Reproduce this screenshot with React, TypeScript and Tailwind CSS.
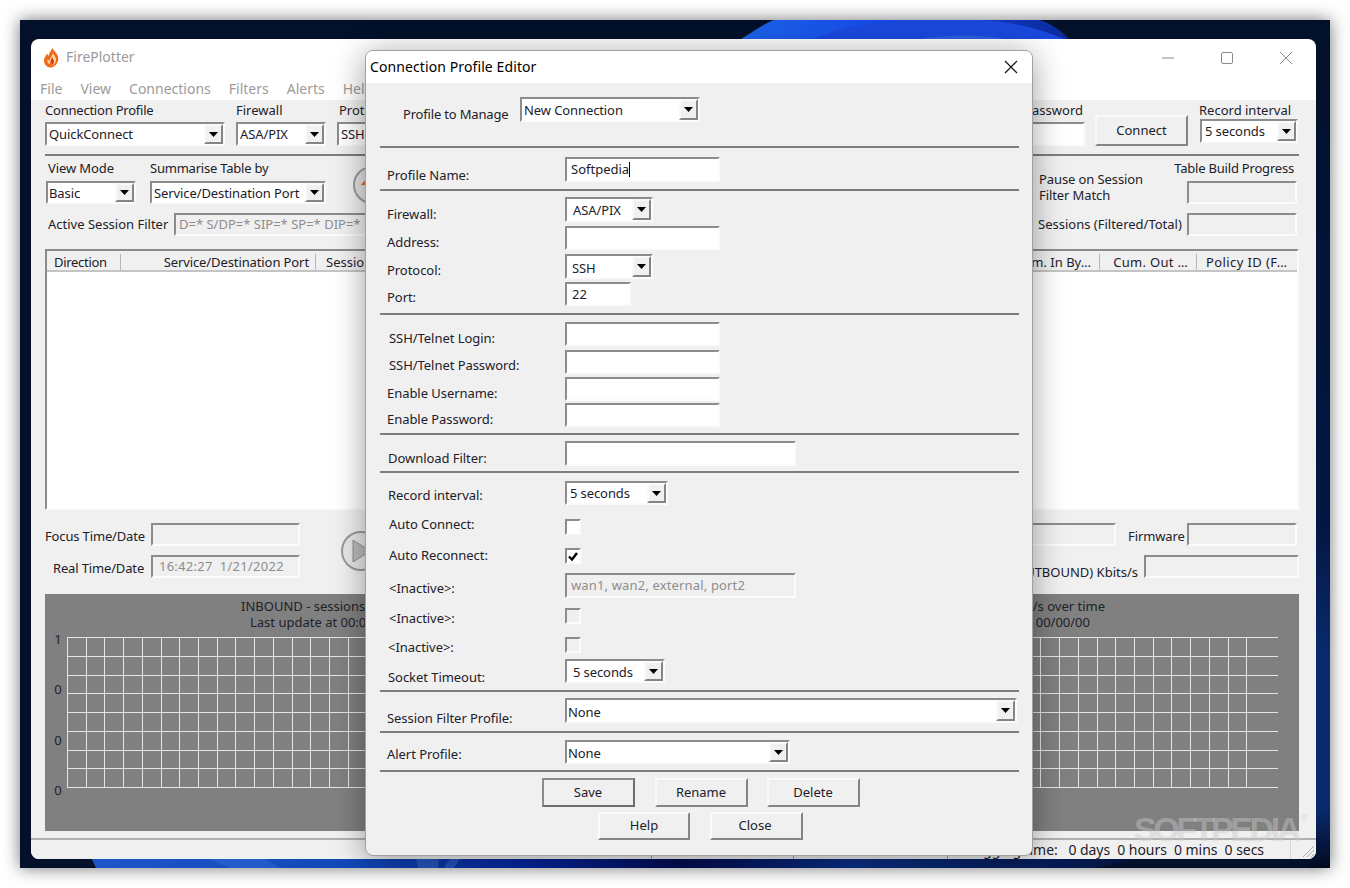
import type { ReactNode } from "react";

const sunken = "border-2 border-t-[#8c8c8c] border-l-[#8c8c8c] border-r-[#fbfbfb] border-b-[#fbfbfb]";
const raised = "border-2 border-t-[#fafafa] border-l-[#fafafa] border-r-[#858585] border-b-[#858585]";

function TextBox({ className = "", value, disabled, children }: { className?: string; value?: string; disabled?: boolean; children?: ReactNode }) {
  return (
    <div className={`${sunken} ${disabled ? "bg-[#f0f0f0] text-[#8e8e8e]" : "bg-white"} flex shrink-0 items-center whitespace-nowrap overflow-hidden ${className}`}>
      {value}
      {children}
    </div>
  );
}

function Combo({ className = "", textClass = "pt-[2px]", value }: { className?: string; textClass?: string; value: string }) {
  return (
    <div className={`${sunken} bg-white flex shrink-0 items-center justify-between whitespace-nowrap ${className}`}>
      <span className={`tracking-[-0.1px] ${textClass}`}>{value}</span>
      <span className={`${raised} bg-[#f0f0f0] h-full w-[19px] flex items-center justify-center shrink-0`}>
        <svg width="9" height="5" viewBox="0 0 9 5"><path d="M0 0h9L4.500 5z" fill="#000" /></svg>
      </span>
    </div>
  );
}

function Btn({ className = "", label, isDefault }: { className?: string; label: string; isDefault?: boolean }) {
  return (
    <div className={`${isDefault ? "border-2 border-[#6e6e6e] border-t-[#8c8c8c] border-l-[#8c8c8c]" : raised} bg-[#f0f0f0] flex items-center justify-center shrink-0 ${className}`}>
      {label}
    </div>
  );
}

function Sep({ className = "" }: { className?: string }) {
  return <div className={`h-[2px] bg-[#7d7d7d] shrink-0 ${className}`} />;
}

// label column is 185 wide, so every control starts at the same x
function Row({ className = "", labelClass = "", label, children }: { className?: string; labelClass?: string; label: string; children: ReactNode }) {
  return (
    <div className={`flex items-start shrink-0 ${className}`}>
      <div className={`w-[185px] shrink-0 -mb-[30px] leading-[16px] whitespace-nowrap tracking-[-0.05px] ${labelClass}`}>{label}</div>
      {children}
    </div>
  );
}

function Check({ className = "", checked, disabled }: { className?: string; checked?: boolean; disabled?: boolean }) {
  return (
    <div className={`${sunken} ${disabled ? "bg-[#f0f0f0]" : "bg-white"} w-[16px] h-[16px] flex items-center justify-center ${className}`}>
      {checked && (
        <svg width="10" height="9" viewBox="0 0 10 9"><path d="M1 4.500l3 3L9 1" fill="none" stroke="#000" strokeWidth="2.400" /></svg>
      )}
    </div>
  );
}

function ConnectionProfileEditor() {
  return (
    <div className="absolute left-[345px] top-[30px] w-[668px] h-[806px] rounded-[8px] border border-[#a0a0a0] bg-[#f0f0f0] shadow-[0_4px_32px_rgba(0,0,0,0.38)] flex flex-col overflow-hidden z-10 text-[#1d2029]">
      <div className="h-[32px] bg-white flex items-center justify-between pl-[4px] pr-[14px] shrink-0 text-[14px] text-black">
        <span className="pb-[2px] tracking-[0.1px]">Connection Profile Editor</span>
        <svg width="14" height="14" viewBox="0 0 14 14"><path d="M1 1l12 12M13 1L1 13" stroke="#111" strokeWidth="1.200" /></svg>
      </div>
      <div className="flex flex-col pl-[14px] pr-[13px]">
        <div className="flex items-start mt-[14px]">
          <div className="w-[140px] pl-[23px] pt-[9px] -mb-[30px] whitespace-nowrap leading-[16px] tracking-[-0.18px]">Profile to Manage</div>
          <Combo className="w-[180px] h-[25px] pl-[2px]" value="New Connection" />
        </div>
        <Sep className="mt-[24px]" />

        <Row className="mt-[9px]" labelClass="pl-[7px] pt-[10px]" label="Profile Name:">
          <TextBox className="w-[155px] h-[25px] pl-[4px]">
            Softpedia<span className="w-px h-[15px] bg-black" />
          </TextBox>
        </Row>
        <Sep className="mt-[7px]" />

        <Row className="mt-[6px]" labelClass="pl-[7px] pt-[9px]" label="Firewall:">
          <Combo className="w-[88px] h-[25px] pl-[6px]" value="ASA/PIX" />
        </Row>
        <Row className="mt-[4px]" labelClass="pl-[7px] pt-[8px]" label="Address:">
          <TextBox className="w-[155px] h-[24px]" />
        </Row>
        <Row className="mt-[4px]" labelClass="pl-[7px] pt-[8px]" label="Protocol:">
          <Combo className="w-[88px] h-[25px] pl-[5px]" textClass="pt-[4px]" value="SSH" />
        </Row>
        <Row className="mt-[3px]" labelClass="pl-[7px] pt-[7px]" label="Port:">
          <TextBox className="w-[66px] h-[24px] pl-[5px] pt-[2px]" value="22" />
        </Row>
        <Sep className="mt-[7px]" />

        <Row className="mt-[7px]" labelClass="pl-[9px] pt-[8px]" label="SSH/Telnet Login:">
          <TextBox className="w-[155px] h-[24px]" />
        </Row>
        <Row className="mt-[4px]" labelClass="pl-[9px] pt-[7px]" label="SSH/Telnet Password:">
          <TextBox className="w-[155px] h-[24px]" />
        </Row>
        <Row className="mt-[3px]" labelClass="pl-[7px] pt-[8px]" label="Enable Username:">
          <TextBox className="w-[155px] h-[24px]" />
        </Row>
        <Row className="mt-[2px]" labelClass="pl-[7px] pt-[8px]" label="Enable Password:">
          <TextBox className="w-[155px] h-[24px]" />
        </Row>
        <Sep className="mt-[6px]" />

        <Row className="mt-[6px]" labelClass="pl-[8px] pt-[9px]" label="Download Filter:">
          <TextBox className="w-[231px] h-[25px]" />
        </Row>
        <Sep className="mt-[5px]" />

        <Row className="mt-[8px]" labelClass="pl-[8px] pt-[6px]" label="Record interval:">
          <Combo className="w-[103px] h-[24px] pl-[3px]" value="5 seconds" />
        </Row>
        <Row className="mt-[11px]" labelClass="pl-[9px]" label="Auto Connect:">
          <Check className="mt-[3px]" />
        </Row>
        <Row className="mt-[12px]" labelClass="pl-[9px]" label="Auto Reconnect:">
          <Check className="mt-[1px]" checked />
        </Row>
        <Row className="mt-[9px]" labelClass="pl-[9px] pt-[7px]" label="<Inactive>:">
          <TextBox className="w-[231px] h-[25px] pl-[4px] tracking-[0.15px]" value="wan1, wan2, external, port2" disabled />
        </Row>
        <Row className="mt-[10px]" labelClass="pl-[9px] pt-[2px]" label="<Inactive>:">
          <Check disabled />
        </Row>
        <Row className="mt-[13px]" labelClass="pl-[8px] pt-[2px]" label="<Inactive>:">
          <Check disabled />
        </Row>
        <Row className="mt-[6px]" labelClass="pl-[8px] pt-[10px]" label="Socket Timeout:">
          <Combo className="w-[100px] h-[24px] pl-[6px]" textClass="pt-[4px]" value="5 seconds" />
        </Row>
        <Sep className="mt-[7px]" />

        <Row className="mt-[6px]" labelClass="pl-[7px] pt-[12px]" label="Session Filter Profile:">
          <Combo className="w-[452px] h-[25px] pl-px" textClass="pt-[4px]" value="None" />
        </Row>
        <Sep className="mt-[8px]" />

        <Row className="mt-[7px]" labelClass="pl-[7px] pt-[6px]" label="Alert Profile:">
          <Combo className="w-[225px] h-[24px] pl-px" textClass="pt-[4px]" value="None" />
        </Row>
        <Sep className="mt-[6px]" />

        <div className="flex justify-center gap-[19px] mt-[6px] pl-[2px]">
          <Btn className="w-[93px] h-[29px] mr-px" label="Save" isDefault />
          <Btn className="w-[93px] h-[29px]" label="Rename" />
          <Btn className="w-[93px] h-[29px]" label="Delete" />
        </div>
        <div className="flex justify-center gap-[20px] mt-[5px] pl-[2px]">
          <Btn className="w-[92px] h-[28px]" label="Help" />
          <Btn className="w-[93px] h-[28px] pr-[3px]" label="Close" />
        </div>
      </div>
    </div>
  );
}

function Flame() {
  return (
    <svg width="17" height="20" viewBox="0 0 17 20">
      <path d="M9.500 0c1 3 4.500 5 5.500 8.500 1 4-1 9-6 11-5 .5-8-3-8-7 0-3 2-4.500 3-7 .5 1 1 2 1.500 2.500C6 5 8 3 9.500 0z" fill="#ee6a1b" />
      <path d="M10 5c.5 2 3 4 3 6.500 0 3-2 5.500-4.500 6.500 1.500-2 1-4-.5-5.500-1 1-1.500 2.500-1.500 4-1.500-1-2.500-3-2-5 1 .5 1.500 1 2 1 .5-3 3-4.500 3.500-7.500z" fill="#fbd7a5" />
      <path d="M9 9c.5 1.500 2 2.500 2 4.500 0 1.500-.8 2.800-2 3.500.3-1.800-.3-3-1.300-4C8 11.500 8.800 10.500 9 9z" fill="#e22a12" />
    </svg>
  );
}

function ChartGrid() {
  const vertical = Array.from({ length: 64 }, (_, i) => 0.5 + Math.round(i * 18.72));
  const horizontal = Array.from({ length: 9 }, (_, i) => 0.5 + Math.round(i * 18.75));
  return (
    <svg width="1212" height="152" className="shrink-0" shapeRendering="crispEdges">
      {vertical.map((x) => (
        <line key={x} x1={x} x2={x} y1={0} y2={150} stroke="#e4e4e4" />
      ))}
      {horizontal.map((y) => (
        <line key={y} x1={0} x2={1211} y1={y} y2={y} stroke="#e4e4e4" />
      ))}
    </svg>
  );
}

function MainWindow() {
  return (
    <div className="absolute left-[11px] top-[19px] w-[1285px] h-[820px] rounded-[8px] overflow-hidden bg-white flex flex-col text-[#1d2029]">
      <div className="h-[38px] shrink-0 flex items-center justify-between pl-[12px] pr-[24px] text-[#9b9b9b]">
        <div className="flex items-center gap-[6px] text-[14px]">
          <Flame />
          <span className="pb-[4px]">FirePlotter</span>
        </div>
        <div className="flex items-center gap-[47px] -mt-[1px]">
          <svg width="12" height="12" viewBox="0 0 12 12"><path d="M0 6h12" stroke="#8a8a8a" /></svg>
          <svg width="12" height="12" viewBox="0 0 12 12"><rect x=".5" y=".5" width="11" height="11" rx="1.500" fill="none" stroke="#8a8a8a" /></svg>
          <svg width="12" height="12" viewBox="0 0 12 12"><path d="M0 0l12 12M12 0L0 12" stroke="#8a8a8a" /></svg>
        </div>
      </div>
      <div className="h-[23px] shrink-0 flex items-center pl-[9px] gap-[18px] text-[14px] text-[#9b9b9b]">
        <span>File</span>
        <span>View</span>
        <span>Connections</span>
        <span>Filters</span>
        <span>Alerts</span>
        <span>Help</span>
      </div>

      <div className="flex-1 bg-[#f0f0f0] flex flex-col min-h-0">
        <div className="pl-[14px] pr-[17px] flex flex-col">
          {/* connection toolbar */}
          <div className="flex items-start pt-[2px] h-[47px]">
            <div className="flex gap-[11px]">
              <div className="w-[180px]">
                <div className="h-[20px] leading-[16px] tracking-[-0.22px]">Connection Profile</div>
                <Combo className="h-[24px] pl-[2px]" value="QuickConnect" />
              </div>
              <div className="w-[90px]">
                <div className="h-[20px] leading-[16px]">Firewall</div>
                <Combo className="h-[24px] pl-[2px]" value="ASA/PIX" />
              </div>
              <div className="w-[100px]">
                <div className="h-[20px] leading-[16px] pl-[2px]">Protocol</div>
                <Combo className="h-[24px] pl-[2px]" value="SSH" />
              </div>
            </div>
            <div className="ml-auto flex items-start">
              <div className="w-[150px] flex flex-col items-end">
                <div className="h-[20px] leading-[16px] pr-[2px]">SSH Password</div>
                <TextBox className="w-full h-[24px]" />
              </div>
              <Btn className="ml-[10px] mt-[13px] w-[93px] h-[31px]" label="Connect" />
              <div className="ml-[11px] w-[100px]">
                <div className="h-[17px] leading-[16px] whitespace-nowrap">Record interval</div>
                <Combo className="h-[24px] ml-px mr-px pl-[3px]" value="5 seconds" />
              </div>
            </div>
          </div>
          <Sep className="mt-[7px]" />

          {/* view options */}
          <div className="flex items-start mt-[4px] h-[44px]">
            <div className="w-[90px] ml-px">
              <div className="h-[21px] pl-[2px] leading-[16px] tracking-[-0.1px]">View Mode</div>
              <Combo className="h-[23px] pl-px" value="Basic" />
            </div>
            <div className="w-[176px] ml-[14px]">
              <div className="h-[21px] leading-[16px] tracking-[-0.22px]">Summarise Table by</div>
              <Combo className="h-[23px] pl-[2px]" value="Service/Destination Port" />
            </div>
            <div className="ml-[27px] mt-[6px] w-[38px] h-[38px] rounded-full border-2 border-[#9a9a9a] bg-[#e4e4e4] flex items-center justify-center shrink-0">
              <svg width="24" height="26" viewBox="0 0 24 26"><path d="M12 0l11 13h-6v13H7V13H1z" fill="#e8641f" /></svg>
            </div>
            <div className="ml-auto flex items-start">
              <div className="w-[148px] pt-[11px] leading-[16px] tracking-[-0.1px]">
                Pause on Session
                <br />
                Filter Match
              </div>
              <div className="w-[110px] mr-[2px] flex flex-col items-end">
                <div className="h-[21px] leading-[16px] pr-[3px] whitespace-nowrap tracking-[-0.2px]">Table Build Progress</div>
                <TextBox className="w-[110px] h-[23px]" disabled />
              </div>
            </div>
          </div>
          <div className="flex items-center mt-[9px] h-[23px]">
            <span className="pl-[3px] w-[129px] shrink-0">Active Session Filter</span>
            <TextBox className="w-[300px] h-[23px] pl-[3px]" value="D=* S/DP=* SIP=* SP=* DIP=* DP=*" disabled />
            <span className="ml-auto w-[149px]">Sessions (Filtered/Total)</span>
            <TextBox className="w-[110px] h-[23px] mr-[2px]" disabled />
          </div>

          {/* session table */}
          <div className={`${sunken} mt-[13px] h-[261px] bg-white flex flex-col`}>
            <div className="h-[21px] pt-[2px] shrink-0 bg-[#f0f0f0] border-b-2 border-[#c4c4c4] flex items-center whitespace-nowrap">
              <div className="w-[74px] pl-[7px] border-r border-[#b5b5b5] h-[16px] leading-[16px] tracking-[-0.3px]">Direction</div>
              <div className="w-[195px] pr-[6px] text-right border-r border-[#b5b5b5] h-[16px] leading-[16px] tracking-[-0.1px]">Service/Destination Port</div>
              <div className="pl-[10px] leading-[16px]">Session Count</div>
              <div className="ml-auto w-[100px] pr-[8px] text-right border-r border-[#b5b5b5] h-[16px] leading-[16px]">Cum. In By…</div>
              <div className="w-[97px] pr-[8px] text-right border-r border-[#b5b5b5] h-[16px] leading-[16px] tracking-[0.3px]">Cum. Out …</div>
              <div className="w-[100px] pl-[9px] leading-[16px] tracking-[0.4px]">Policy ID (F…</div>
            </div>
          </div>

          {/* time and bandwidth */}
          <div className="flex items-start mt-[13px] h-[55px]">
            <div className="flex flex-col gap-[9px] w-[255px]">
              <div className="flex items-start">
                <span className="w-[106px] mt-[5px] leading-[16px] shrink-0 tracking-[-0.15px]">Focus Time/Date</span>
                <TextBox className="w-[149px] h-[23px]" disabled />
              </div>
              <div className="flex items-start">
                <span className="w-[106px] mt-[5px] leading-[16px] pl-[8px] shrink-0 tracking-[-0.15px]">Real Time/Date</span>
                <TextBox className="w-[149px] h-[23px] pl-[6px] pt-px tracking-[0.25px]" value={"16:42:27\u00a0\u00a01/21/2022"} disabled />
              </div>
            </div>
            <div className="ml-[41px] mt-[8px] w-[40px] h-[40px] rounded-full border-2 border-[#9a9a9a] bg-[#e8e8e8] flex items-center justify-center shrink-0">
              <svg width="20" height="22" viewBox="0 0 20 22"><path d="M2 0l17 11L2 22z" fill="#bcbcbc" stroke="#8f8f8f" /></svg>
            </div>
            <div className="ml-auto flex flex-col items-end gap-[9px]">
              <div className="flex items-start">
                <TextBox className="w-[150px] h-[23px]" disabled />
                <span className="ml-[12px] w-[59px] mt-[5px] leading-[16px] tracking-[-0.1px]">Firmware</span>
                <TextBox className="w-[110px] h-[23px] mr-[2px]" disabled />
              </div>
              <div className="flex items-start">
                <span className="mr-[6px] mt-[9px] leading-[16px]">Total (OUTBOUND) Kbits/s</span>
                <TextBox className="w-[155px] h-[23px]" disabled />
              </div>
            </div>
          </div>

          {/* chart panel */}
          <div className="mt-[16px] h-[237px] bg-[#808080] flex flex-col text-[#20222a]">
            <div className="flex justify-between pt-[4px] pl-[196px] pr-[194px] leading-[16px]">
              <span>INBOUND - sessions</span>
              <span>OUTBOUND - Kbits/s over time</span>
            </div>
            <div className="flex justify-between pl-[205px] pr-[209px] leading-[16px]">
              <span>Last update at 00:00:00</span>
              <span>00:00:00 00/00/00</span>
            </div>
            <div className="flex mt-[7px]">
              <div className="w-[22px] -mt-[6px] h-[167px] flex flex-col justify-between items-center pl-[4px] leading-[16px] shrink-0">
                <span>1</span>
                <span>0</span>
                <span>0</span>
                <span>0</span>
              </div>
              <ChartGrid />
            </div>
          </div>
        </div>

        {/* status bar */}
        <div className="mt-[7px] flex-1 border-t-2 border-[#b0b0b0] flex items-stretch relative">
          <div className="w-[621px] border-r border-[#a0a0a0]" />
          <div className="w-[142px] border-r border-[#a0a0a0]" />
          <div className="w-[154px] border-r border-[#a0a0a0]" />
          <div className="w-[343px] border-r border-[#d8d8d8] flex items-center justify-end pr-[26px] whitespace-pre text-[14px] leading-[16px] tracking-[-0.05px]">
            {"Logging time:   0 days  0 hours  0 mins  0 secs"}
          </div>
          <svg width="15" height="15" viewBox="0 0 15 15" className="absolute right-[1px] bottom-[1px]">
            <path d="M14 3L3 14M14 7l-7 7M14 11l-3 3" stroke="#a8a8a8" fill="none" />
          </svg>
        </div>
      </div>
    </div>
  );
}

function Wallpaper() {
  return (
    <svg className="absolute inset-0" width="1310" height="848" viewBox="0 0 1310 848">
      <defs>
        <linearGradient id="bottomBand" x1="0" x2="1" y1="0" y2="0">
          <stop offset="0" stopColor="#1d56c8" />
          <stop offset="0.25" stopColor="#1148b8" />
          <stop offset="0.42" stopColor="#05249a" />
          <stop offset="0.56" stopColor="#020d50" />
          <stop offset="0.72" stopColor="#0a2f86" />
          <stop offset="1" stopColor="#03123a" />
        </linearGradient>
        <linearGradient id="topBloom" x1="0" x2="1" y1="0" y2="0">
          <stop offset="0" stopColor="#1c62e8" />
          <stop offset="0.5" stopColor="#1546e6" />
          <stop offset="1" stopColor="#0b2a9a" />
        </linearGradient>
        <linearGradient id="rightSide" x1="0" x2="0" y1="0" y2="1">
          <stop offset="0" stopColor="#03102a" />
          <stop offset="0.6" stopColor="#041744" />
          <stop offset="0.75" stopColor="#0a2a6e" />
          <stop offset="0.93" stopColor="#0a2a6e" />
          <stop offset="1" stopColor="#020a20" />
        </linearGradient>
      </defs>
      <rect width="1310" height="848" fill="#03102a" />
      <rect x="1290" width="20" height="848" fill="url(#rightSide)" />
      <path d="M720 20C750 0 760-5 768 0H1020C1035 5 1045 15 1050 20V30H720z" fill="url(#topBloom)" />
      <path d="M790 20C830 5 860 0 880 0H960C1000 2 1030 12 1050 22V30H790z" fill="#1a48dc" />
      <path d="M895 20C925 14 965 14 990 20V30H895z" fill="#2a5fe0" />
      <path d="M70 835H1130L1075 848H76z" fill="url(#bottomBand)" />
      <path d="M180 835h60l20 13h-50z" fill="#2f6ad6" opacity=".5" />
      <path d="M395 835h24l-1 13h-20zM442 835h-10l-8 13h10z" fill="#2b5cc0" opacity=".8" />
    </svg>
  );
}

export default function App() {
  return (
    <div className="w-[1350px] h-[888px] bg-white p-[20px] overflow-hidden font-['Noto_Sans',sans-serif] text-[13px]">
      <div className="relative w-[1310px] h-[848px] shadow-[0_0_16px_rgba(0,0,0,0.55)] overflow-hidden">
        <Wallpaper />
        <MainWindow />
        <ConnectionProfileEditor />
        <div className="absolute left-[1114px] top-[792px] z-20 flex items-start text-white/35 [text-shadow:0_0_1px_rgba(0,0,0,0.15)] font-['Liberation_Sans',sans-serif] font-bold text-[34px] leading-[34px] tracking-[-3.4px]">
          SOFTPEDIA<span className="text-[9px] leading-[12px] font-normal tracking-normal pl-[3px]">®</span>
        </div>
      </div>
    </div>
  );
}
